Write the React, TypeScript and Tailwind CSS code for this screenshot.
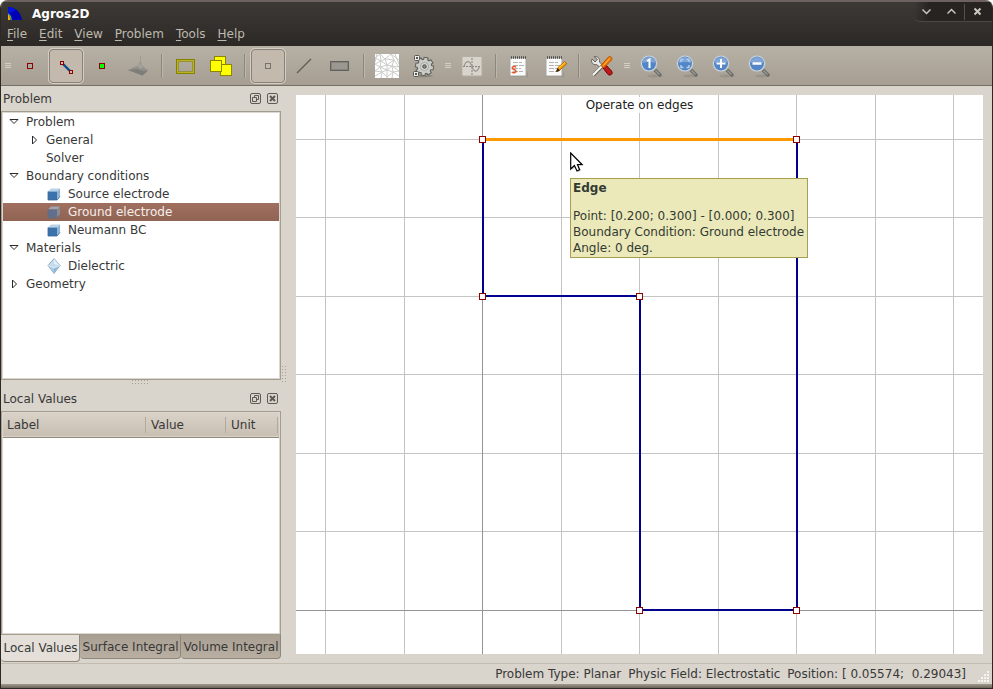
import { useState, type ReactNode } from "react";

/* ---------- toolbar icons ---------- */

function NodeIcon({ fill = "none", stroke = "#8b0000" }: { fill?: string; stroke?: string }) {
  return (
    <svg width="24" height="24" viewBox="0 0 24 24" shapeRendering="crispEdges">
      <rect x="9.5" y="9.5" width="5" height="5" fill={fill} stroke={stroke} />
    </svg>
  );
}

function EdgeIcon() {
  return (
    <svg width="24" height="24" viewBox="0 0 24 24">
      <path d="M8 9l8 8" stroke="#0b4a8c" strokeWidth="2.4" />
      <rect x="6.5" y="7.5" width="3" height="3" fill="#c9bfb4" stroke="#8b0000" />
      <rect x="15.5" y="16.5" width="3" height="3" fill="#c9bfb4" stroke="#8b0000" />
    </svg>
  );
}

function SurfaceIcon() {
  return (
    <svg width="24" height="24" viewBox="0 0 24 24">
      <path d="M2 16l10-4.500 2.500-5 2 5.500 5.500 4.500-5.500 5z" fill="#918f8a" />
      <path d="M11 12.500l3.500-4 2.500 4.500-2 2z" fill="#a3a19b" />
      <path d="M2 16l9-1 6 2 5-.5-5.500 5z" fill="#7f7d78" />
      <path d="M14.500 2v8" stroke="#a09c93" />
    </svg>
  );
}

function SelectRegionIcon() {
  return (
    <svg width="24" height="24" viewBox="0 0 24 24" shapeRendering="crispEdges">
      <rect x="3.500" y="5.500" width="18" height="14" fill="none" stroke="#858000" />
      <rect x="4.500" y="6.500" width="16" height="12" fill="none" stroke="#bab51e" />
      <rect x="5.500" y="7.500" width="14" height="10" fill="none" stroke="#96913a" />
    </svg>
  );
}

function TransformIcon() {
  return (
    <svg width="28" height="24" viewBox="0 0 28 24" shapeRendering="crispEdges">
      <g fill="#ffff00" stroke="#8a8600">
        <rect x="7.500" y="2.500" width="11" height="11" />
        <rect x="13.500" y="10.500" width="11" height="11" />
        <rect x="3.500" y="6.500" width="11" height="11" />
      </g>
    </svg>
  );
}

function LineIcon() {
  return (
    <svg width="24" height="24" viewBox="0 0 24 24">
      <path d="M5 19L19 5" stroke="#62605b" strokeWidth="1.500" />
    </svg>
  );
}

function RectIcon() {
  return (
    <svg width="24" height="24" viewBox="0 0 24 24" shapeRendering="crispEdges">
      <rect x="2.500" y="7.500" width="18" height="9" fill="#9b9892" stroke="#63615d" />
      <rect x="3.500" y="8.500" width="16" height="7" fill="none" stroke="#86837d" />
    </svg>
  );
}

function MeshIcon() {
  return (
    <svg width="24" height="24" viewBox="0 0 24 24">
      <rect width="24" height="24" fill="#fff" />
      <path
        d="M0 4l5-4 5 5 6-5 8 6M0 10l6-3 6 4 7-5 5 7M0 17l5-4 7 3 5-4 7 5M0 22l7-4 5 5 6-5 6 4M5 0l1 7-1 6 2 5-1 6M10 5l2 6v5l0 8M16 0l3 6-2 6 1 6-1 6M0 4l6 3 4-2 9 1M0 10l5 3 7-2 5 1 7 1M0 17l7 1 5-2 6 2 6-1M2 0l-2 8M20 0l4 10"
        fill="none"
        stroke="#cbcbcb"
      />
    </svg>
  );
}

const gearTeeth = [10, 55, 100, 145, 190, 235, 280, 325];

function GearIcon() {
  return (
    <svg width="24" height="24" viewBox="0 0 24 24">
      <ellipse cx="12" cy="22" rx="10" ry="1.500" fill="#7d786e" opacity=".6" />
      <g fill="#5e605b">
        {gearTeeth.map((a) => (
          <rect key={a} x="11" y="3" width="5" height="6" transform={`rotate(${a} 13.500 12.500)`} />
        ))}
        <circle cx="13.500" cy="12.500" r="7.800" />
      </g>
      <g fill="#cbccc8">
        {gearTeeth.map((a) => (
          <rect key={a} x="12" y="4" width="3" height="5" transform={`rotate(${a} 13.500 12.500)`} />
        ))}
        <circle cx="13.500" cy="12.500" r="6.800" />
      </g>
      <circle cx="13.500" cy="12.500" r="4" fill="#dededb" stroke="#a3a49f" />
      <circle cx="13.500" cy="12.500" r="1.800" fill="#8b8c86" stroke="#474944" />
      <g fill="#eeeeec" stroke="#555753">
        <rect x="3.500" y="1.500" width="5" height="5" rx="1" />
        <rect x="2.500" y="17.500" width="5" height="5" rx="1" />
      </g>
      <path d="M5 4h2M4 20h2" stroke="#555753" strokeWidth="2" />
    </svg>
  );
}

function ChartIcon() {
  return (
    <svg width="24" height="24" viewBox="0 0 24 24">
      <rect x="2" y="2.500" width="20" height="19.500" rx="1" fill="#d8d3cb" stroke="#b3ada3" />
      <path d="M12 4v17M3 12.500h18" stroke="#85817a" strokeDasharray="2 1" />
      <path d="M4 12.500c2-6.500 5.500-6.500 8 0s5 6 7.500 0" fill="none" stroke="#9a968f" strokeWidth="1.200" />
    </svg>
  );
}

function Notepad({ children }: { children: ReactNode }) {
  return (
    <svg width="24" height="24" viewBox="0 0 24 24">
      <path d="M2 22h17l2-5v6H2z" fill="#8b867b" opacity=".5" />
      <rect x="3" y="4" width="16" height="18" fill="#fafafa" stroke="#a6a6a2" />
      <path d="M4 3.500h15" stroke="#4e4e4b" strokeWidth="2.500" strokeDasharray="1 1" />
      <path d="M6 8.500h9M6 11.500h11M6 14.500h8M6 17.500h10" stroke="#b4b4b2" strokeDasharray="5 1" />
      {children}
    </svg>
  );
}

function ReportIcon() {
  return (
    <Notepad>
      <path d="M9 13.200c-1-1-3.800-1-3.800.8 0 2 3.800 1 3.800 3.200 0 1.800-3 1.800-4.200.8" fill="none" stroke="#e9572a" strokeWidth="1.500" />
    </Notepad>
  );
}

function ScriptIcon() {
  return (
    <Notepad>
      <path d="M13.500 17.500l1.500-4 6.500-6 2.300 2.200-6.800 6.300z" fill="#f8a000" stroke="#a85500" strokeWidth="0.800" />
      <path d="M13 18l1.500-4 2.500 2.500z" fill="#2e2414" />
      <path d="M16 13.500l6-5" stroke="#ffd45a" />
    </Notepad>
  );
}

function ToolsIcon() {
  return (
    <svg width="24" height="24" viewBox="0 0 24 24">
      <path d="M11.500 12l3-2.500 7 7.500c2 3-1 5-3.500 3.500z" fill="#c01818" stroke="#710505" />
      <path d="M4 2.500l3.500 3-2.500 2.500-3-3c-1.500 3 1 6.500 4.500 5.500l5 4 2-2.500-4-4c.5-3.500-2-6-5.500-5.500z" fill="#e9e9e7" stroke="#63645f" />
      <path d="M3.500 21l9-9" stroke="#63645f" strokeWidth="3.500" />
      <path d="M3 21l9-9" stroke="#f7f7f5" strokeWidth="2" />
      <path d="M11 11.500L18.500 3c1.500-1.500 4.500 1 3 3l-8 8z" fill="#f57900" stroke="#b95000" />
      <path d="M13.500 11.500l6-7" stroke="#ffc066" />
    </svg>
  );
}

function ZoomIcon({ children }: { children: ReactNode }) {
  return (
    <svg width="24" height="24" viewBox="0 0 24 24">
      <ellipse cx="15" cy="22" rx="7" ry="1.500" fill="#8b867b" opacity=".5" />
      <path d="M16 16l5 5" stroke="#6b6c67" strokeWidth="3.500" strokeLinecap="round" />
      <path d="M16.500 16.500l4 4" stroke="#9a9b96" strokeWidth="1.200" />
      <circle cx="10" cy="9.500" r="8.500" fill="#d0d6dc" stroke="#aeb0ac" />
      <circle cx="10" cy="9.500" r="7" fill="#5286c6" />
      <path d="M3.500 9a6.500 6 0 0 1 13 0q-6-2-13 0z" fill="#80a6d7" />
      {children}
    </svg>
  );
}

/* ---------- toolbar pieces ---------- */

function ToolButton({ label, pressed = false, onClick, children }: { label: string; pressed?: boolean; onClick?: () => void; children: ReactNode }) {
  return (
    <button
      type="button"
      aria-label={label}
      aria-pressed={pressed}
      onClick={onClick}
      className={`mx-px flex h-[34px] w-[34px] shrink-0 items-center justify-center rounded-sm border ${
        pressed ? "border-[#888177] bg-[#c3b9ad] shadow-[0_0_0_1px_#d3cec4]" : "border-transparent"
      }`}
    >
      {children}
    </button>
  );
}

function Separator() {
  return (
    <div className="flex w-[11px] shrink-0 justify-center">
      <div className="h-6 w-px bg-[#8c877c] shadow-[1px_0_0_#bcb6ab]" />
    </div>
  );
}

function Handle() {
  return (
    <div className="flex w-[13px] shrink-0 flex-col items-center gap-px">
      <div className="h-px w-1.5 bg-[#d3cfc6]" />
      <div className="h-px w-1.5 bg-[#d3cfc6]" />
      <div className="h-px w-1.5 bg-[#d3cfc6]" />
    </div>
  );
}

/* ---------- docks ---------- */

function DockTitle({ title }: { title: string }) {
  return (
    <div className="flex h-[25px] shrink-0 items-center gap-1.5 pl-0.5 pr-[3px]">
      <h2 className="grow">{title}</h2>
      <button type="button" aria-label={`Float ${title}`}>
        <svg width="11" height="11" viewBox="0 0 11 11" fill="none" stroke="#5e5a54">
          <rect x=".5" y=".5" width="10" height="10" rx="1.500" />
          <path d="M4.500 4.500v-2h4v4h-2M2.500 4.500h4v4h-4z" />
        </svg>
      </button>
      <button type="button" aria-label={`Close ${title}`}>
        <svg width="11" height="11" viewBox="0 0 11 11" fill="none" stroke="#5e5a54">
          <rect x=".5" y=".5" width="10" height="10" rx="1.500" />
          <path d="M3 3l5 5M8 3l-5 5" strokeWidth="2" />
        </svg>
      </button>
    </div>
  );
}

function CubeIcon({ dim = false }: { dim?: boolean }) {
  return (
    <svg width="14" height="14" viewBox="0 0 14 14">
      <path d="M1 4.500l3-3h9l-3 3z" fill={dim ? "#a3a3ad" : "#b9d3ea"} />
      <path d="M10 4.500l3-3v8l-3 3.500z" fill={dim ? "#8c8894" : "#8db3d8"} />
      <path d="M1 4.500h9V13H1z" fill={dim ? "#60708c" : "#3b72aa"} />
      <path d="M1 4.500V13h9l3-3.500" fill="none" stroke={dim ? "#66677b" : "#3868a0"} strokeWidth="0.800" />
    </svg>
  );
}

function DiamondIcon() {
  return (
    <svg width="14" height="16" viewBox="0 0 14 16">
      <path d="M7 .5l6 7-6 8-6-8z" fill="#c5dcf0" stroke="#7b9dbd" strokeWidth="0.800" />
      <path d="M1.500 7l5.500 3v5z" fill="#a9c8e4" />
      <path d="M12.500 7L7 10v5z" fill="#8fb3d5" />
      <path d="M7 1v5l5.500 1.500z" fill="#e3eff9" />
      <path d="M1.500 7.500L7 10l5.500-2.500" fill="none" stroke="#e4eef7" />
    </svg>
  );
}

function Arrow({ open }: { open: boolean }) {
  return (
    <svg width="10" height="10" viewBox="0 0 10 10" fill="none" stroke="#2a2a2a">
      {open ? <path d="M1 2.500h8L5 6.500z" /> : <path d="M3.500 1v8l4-4z" />}
    </svg>
  );
}

type Row = { label: string; indent: string; arrow?: "open" | "closed"; icon?: "cube" | "diamond" };

const rows: Row[] = [
  { label: "Problem", indent: "pl-1.5", arrow: "open" },
  { label: "General", indent: "pl-[26px]", arrow: "closed" },
  { label: "Solver", indent: "pl-[43px]" },
  { label: "Boundary conditions", indent: "pl-1.5", arrow: "open" },
  { label: "Source electrode", indent: "pl-11", icon: "cube" },
  { label: "Ground electrode", indent: "pl-11", icon: "cube" },
  { label: "Neumann BC", indent: "pl-11", icon: "cube" },
  { label: "Materials", indent: "pl-1.5", arrow: "open" },
  { label: "Dielectric", indent: "pl-11", icon: "diamond" },
  { label: "Geometry", indent: "pl-1.5", arrow: "closed" },
];

function ProblemTree() {
  const [selected, setSelected] = useState("Ground electrode");
  return (
    <div className="h-[269px] shrink-0 border border-[#a39c8f] bg-white">
      <ul role="tree" aria-label="Problem" className="h-full border border-[#dcd7cf]">
        {rows.map((row) => {
          const active = row.label === selected;
          return (
            <li key={row.label} role="treeitem" aria-selected={active}>
              <button
                type="button"
                onClick={() => setSelected(row.label)}
                className={`flex h-[18px] w-full items-center whitespace-nowrap ${row.indent} ${
                  active ? "bg-linear-to-b from-[#a06f60] to-[#906352] text-[#f6efec]" : ""
                }`}
              >
                {row.arrow && (
                  <span className="mr-[7px]">
                    <Arrow open={row.arrow === "open"} />
                  </span>
                )}
                {row.icon && (
                  <span className="mr-[7px]">{row.icon === "cube" ? <CubeIcon dim={active} /> : <DiamondIcon />}</span>
                )}
                {row.label}
              </button>
            </li>
          );
        })}
      </ul>
    </div>
  );
}

const tabs = ["Local Values", "Surface Integral", "Volume Integral"];

function LocalValues() {
  const [tab, setTab] = useState(tabs[0]);
  return (
    <>
      <div className="min-h-0 grow border border-[#a39c8f] bg-white">
        <div className="h-full border border-[#dcd7cf]">
          <table className="w-full table-fixed border-collapse text-left">
            <thead>
              <tr className="h-6 border-b border-[#91897c] bg-linear-to-b from-[#d9d2c8] to-[#c9bfb3]">
                <th className="w-[143px] pl-1 font-normal">
                  <div className="border-r border-[#b1a99d]">Label</div>
                </th>
                <th className="w-20 pl-[5px] font-normal">
                  <div className="border-r border-[#b1a99d]">Value</div>
                </th>
                <th className="pl-[5px] pr-px font-normal">
                  <div className="border-r border-[#b1a99d]">Unit</div>
                </th>
              </tr>
            </thead>
          </table>
        </div>
      </div>
      <div role="tablist" className="flex h-7 shrink-0 items-start">
        {tabs.map((name) => (
          <button
            key={name}
            type="button"
            role="tab"
            aria-selected={name === tab}
            onClick={() => setTab(name)}
            className={`grow whitespace-nowrap rounded-b-sm border-b border-r border-[#8f877a] pl-px ${
              name === tab ? "h-[27px] bg-[#e4e0d9]" : "h-6 bg-linear-to-b from-[#a89f92] to-[#b9b0a3]"
            }`}
          >
            {name}
          </button>
        ))}
      </div>
    </>
  );
}

/* ---------- geometry view ---------- */

const gridX = [29, 108, 265, 343, 422, 500, 579, 657];
const gridY = [44, 122, 201, 279, 358, 436];
const nodes = [
  [186, 44],
  [500, 44],
  [186, 201],
  [343, 201],
  [343, 515],
  [500, 515],
];

function GeometryView() {
  return (
    <main className="relative grow overflow-hidden bg-white">
      <svg className="absolute inset-0 h-full w-full" shapeRendering="crispEdges">
        <g stroke="#c4c4c4">
          {gridX.map((x) => (
            <line key={x} x1={x + 0.5} x2={x + 0.5} y1="0" y2="100%" />
          ))}
          {gridY.map((y) => (
            <line key={y} x1="0" x2="100%" y1={y + 0.5} y2={y + 0.5} />
          ))}
        </g>
        <g stroke="#949494">
          <line x1="186.500" x2="186.500" y1="0" y2="100%" />
          <line x1="0" x2="100%" y1="515.500" y2="515.500" />
        </g>
        <path d="M187 44V201H344V515H501V44" fill="none" stroke="#00008b" strokeWidth="2" />
        <path d="M187 44.500H500" stroke="#ff9900" strokeWidth="3" />
        {nodes.map(([x, y]) => (
          <rect key={`${x}-${y}`} x={x - 2.5} y={y - 2.5} width="6" height="6" fill="#fff" stroke="#8b0000" />
        ))}
      </svg>
      <div className="relative flex justify-center pt-0.5">
        <p className="bg-white/80 leading-4 text-[#222]">Operate on edges</p>
      </div>
      <svg className="absolute left-[274px] top-[57px]" width="14" height="22" viewBox="0 0 14 22">
        <path d="M1 1v16l3.500-3.500L7 19l3-1.500L8 13h4.500z" fill="#999" opacity=".5" transform="translate(1 1)" />
        <path d="M.7 1v16l3.700-3.500L7 19l2.600-1.300L7.500 12.500h4.500z" fill="#fff" stroke="#000" strokeWidth="1.200" />
      </svg>
      <div
        role="tooltip"
        className="absolute left-[274px] top-[83px] whitespace-nowrap border border-[#a5a050] bg-[#ebe9b9] py-px pl-0.5 pr-[3px] leading-4 text-[#333a33]"
      >
        <p className="mb-3 font-bold">Edge</p>
        <p>Point: [0.200; 0.300] - [0.000; 0.300]</p>
        <p>Boundary Condition: Ground electrode</p>
        <p>Angle: 0 deg.</p>
      </div>
    </main>
  );
}

/* ---------- window ---------- */

const menus = ["File", "Edit", "View", "Problem", "Tools", "Help"];

function TitleBar() {
  return (
    <div className="flex h-[23px] items-center pl-1.5">
      <svg width="16" height="16" viewBox="0 0 16 16">
        <path d="M1 1c7 0 13 5 14 13H5C5 10 3 8 1 8z" fill="#0000b4" />
        <path d="M1 1c3 0 6 1 8 3L1 8z" fill="#0014dc" />
        <path d="M1 8c1.500 1 2 3 2 6H1z" fill="#ffb000" />
        <path d="M1 8c2 0 3 3 3 6" fill="none" stroke="#37c8e0" />
      </svg>
      <h1 className="ml-[9px] grow font-bold text-white">Agros2D</h1>
      <div className="flex h-5 items-center self-start rounded-bl-md border-b border-[#4a4744] bg-linear-to-r from-transparent to-[#262321] to-20% pr-0.5 text-[#cbc8c0]">
        <button type="button" aria-label="Minimize" className="px-2">
          <svg width="9" height="9" viewBox="0 0 9 9" fill="none" stroke="currentColor" strokeWidth="1.500">
            <path d="M.5 2.500l4 4 4-4" />
          </svg>
        </button>
        <button type="button" aria-label="Maximize" className="px-2">
          <svg width="9" height="9" viewBox="0 0 9 9" fill="none" stroke="currentColor" strokeWidth="1.500">
            <path d="M.5 6.500l4-4 4 4" />
          </svg>
        </button>
        <button type="button" aria-label="Close" className="h-4 border-l border-[#555250] px-2">
          <svg width="9" height="9" viewBox="0 0 9 9" fill="none" stroke="currentColor" strokeWidth="2">
            <path d="M1.500 1.500l6 6M7.500 1.500l-6 6" />
          </svg>
        </button>
      </div>
    </div>
  );
}

function Toolbar() {
  const [mode, setMode] = useState("edges");
  return (
    <div role="toolbar" className="flex h-10 shrink-0 items-center border-b border-[#777064] bg-linear-to-b from-[#b6b0a5] to-[#a69e93]">
      <div className="w-[11px]">
        <Handle />
      </div>
      <ToolButton label="Operate on nodes" pressed={mode === "nodes"} onClick={() => setMode("nodes")}>
        <NodeIcon />
      </ToolButton>
      <ToolButton label="Operate on edges" pressed={mode === "edges"} onClick={() => setMode("edges")}>
        <EdgeIcon />
      </ToolButton>
      <ToolButton label="Operate on labels" pressed={mode === "labels"} onClick={() => setMode("labels")}>
        <NodeIcon fill="#00ff00" />
      </ToolButton>
      <ToolButton label="Postprocessor" pressed={mode === "post"} onClick={() => setMode("post")}>
        <SurfaceIcon />
      </ToolButton>
      <Separator />
      <ToolButton label="Select region">
        <SelectRegionIcon />
      </ToolButton>
      <ToolButton label="Transform">
        <TransformIcon />
      </ToolButton>
      <Separator />
      <ToolButton label="Local point value" pressed>
        <NodeIcon stroke="#77736d" />
      </ToolButton>
      <ToolButton label="Surface integral">
        <LineIcon />
      </ToolButton>
      <ToolButton label="Volume integral">
        <RectIcon />
      </ToolButton>
      <Separator />
      <ToolButton label="Mesh">
        <MeshIcon />
      </ToolButton>
      <ToolButton label="Solve">
        <GearIcon />
      </ToolButton>
      <Handle />
      <ToolButton label="Chart">
        <ChartIcon />
      </ToolButton>
      <Separator />
      <ToolButton label="Report">
        <ReportIcon />
      </ToolButton>
      <ToolButton label="Script editor">
        <ScriptIcon />
      </ToolButton>
      <Separator />
      <ToolButton label="Options">
        <ToolsIcon />
      </ToolButton>
      <Handle />
      <ToolButton label="Zoom to original size">
        <ZoomIcon>
          <path d="M8 7l2.500-1.500V14" fill="none" stroke="#fff" strokeWidth="2" />
        </ZoomIcon>
      </ToolButton>
      <ToolButton label="Zoom best fit">
        <ZoomIcon>
          <path d="M6 8V5.500h2.500M11.500 5.500H14V8M14 11v2.500h-2.500M8.500 13.500H6V11" fill="none" stroke="#b5cde9" strokeWidth="1.500" />
        </ZoomIcon>
      </ToolButton>
      <ToolButton label="Zoom in">
        <ZoomIcon>
          <path d="M10 5v9M5.500 9.500h9" stroke="#fff" strokeWidth="2" />
        </ZoomIcon>
      </ToolButton>
      <ToolButton label="Zoom out">
        <ZoomIcon>
          <path d="M5.500 9.500h9" stroke="#fff" strokeWidth="2.500" />
        </ZoomIcon>
      </ToolButton>
    </div>
  );
}

function Dots({ cols, rowsCount }: { cols: number; rowsCount: number }) {
  return (
    <svg width={cols * 3} height={rowsCount * 3} shapeRendering="crispEdges" fill="#a9a297">
      {Array.from({ length: cols * rowsCount }, (_, i) => (
        <rect key={i} x={(i % cols) * 3} y={Math.floor(i / cols) * 3} width="1" height="1" />
      ))}
    </svg>
  );
}

export default function App() {
  return (
    <div className="flex h-screen flex-col overflow-hidden rounded-t-lg border-x border-[#2b2826] bg-[#d9d4cc] font-['DejaVu_Sans',sans-serif] text-xs text-[#383838]">
      <header className="shrink-0 border-t-2 border-[#6d6260] bg-linear-to-b from-[#3d3a36] to-[#2b2826]">
        <TitleBar />
        <nav className="flex h-[21px] items-start pt-px text-[#bdb9ad]">
          {menus.map((m) => (
            <button key={m} type="button" className="px-[6px]">
              <span className="underline underline-offset-2">{m[0]}</span>
              {m.slice(1)}
            </button>
          ))}
        </nav>
      </header>
      <Toolbar />
      <div className="flex min-h-0 grow">
        <aside className="flex w-[280px] shrink-0 flex-col">
          <DockTitle title="Problem" />
          <ProblemTree />
          <div className="flex h-[6px] shrink-0 items-center justify-center">
            <Dots cols={6} rowsCount={2} />
          </div>
          <DockTitle title="Local Values" />
          <LocalValues />
        </aside>
        <div className="flex w-[15px] shrink-0 items-center pl-px">
          <Dots cols={2} rowsCount={6} />
        </div>
        <div className="flex grow pb-[9px] pr-[9px] pt-[9px]">
          <GeometryView />
        </div>
      </div>
      <footer className="flex h-[21px] shrink-0 items-center border-t border-[#c3bcb0] pl-2 pr-0.5">
        <div className="flex grow justify-end gap-[7px] whitespace-pre pr-[11px]">
          <span>Problem Type: Planar</span>
          <span>Physic Field: Electrostatic</span>
          <span>Position: [ 0.05574;  0.29043]</span>
        </div>
        <svg width="13" height="13" viewBox="0 0 13 13" className="self-end" shapeRendering="crispEdges" fill="#f7f5f1">
          {[0, 1, 2, 3].map((r) =>
            Array.from({ length: r + 1 }, (_, c) => <rect key={`${r}-${c}`} x={10 - c * 3} y={r * 3} width="2" height="2" />),
          )}
        </svg>
      </footer>
      <div className="h-[5px] shrink-0 border-b border-[#2b2826] bg-linear-to-b from-[#a39b8f] to-[#6a6459]" />
    </div>
  );
}
